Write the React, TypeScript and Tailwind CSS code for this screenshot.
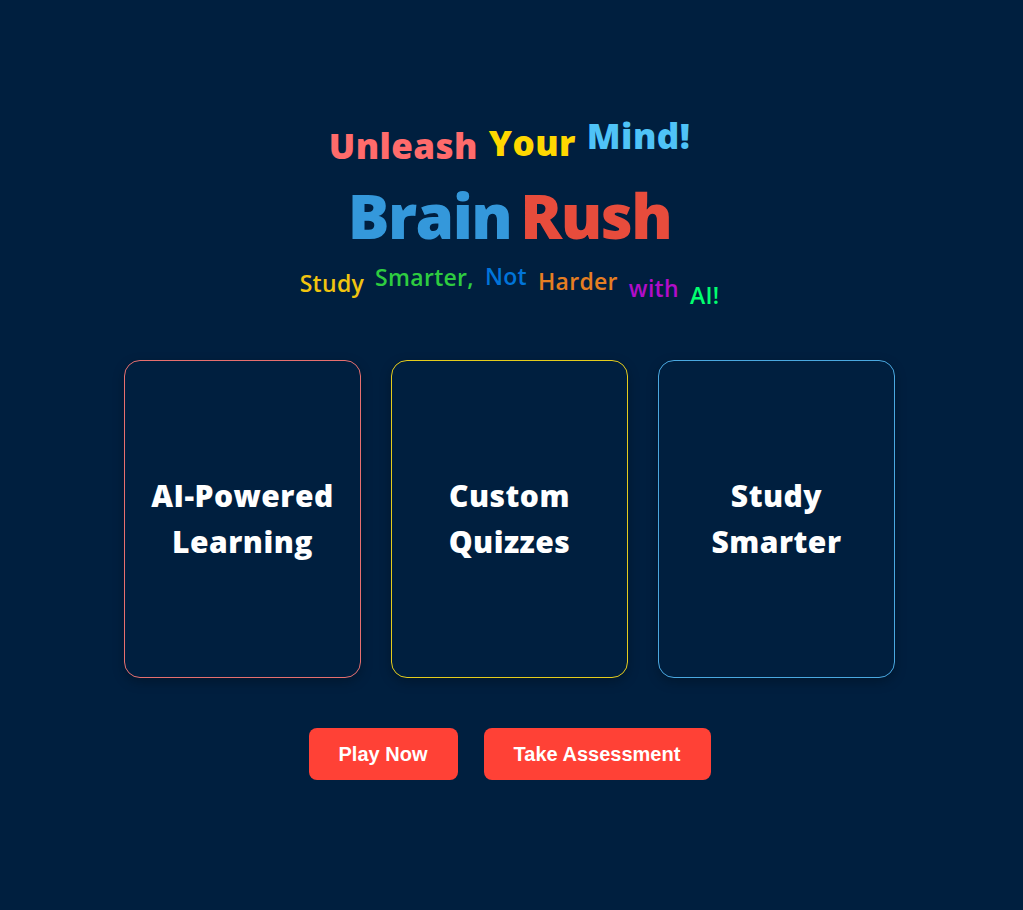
import React from "react";

const font = { fontFamily: '"Open Sans", "Noto Sans", sans-serif' };

export default function App() {
  return (
    <main
      className="min-h-[910px] w-full bg-[#001f3f] flex flex-col items-center pt-[110px] pr-[4px]"
      style={font}
    >
      {/* HEADLINE */}
      <h2 className="flex items-end gap-[11px] text-[35px] font-extrabold leading-none tracking-[0.4px] h-[52px]">
        <span className="text-[#ff6b6b] translate-y-[1px]">Unleash</span>
        <span className="text-[#ffd700] -translate-y-[2px]">Your</span>
        <span className="text-[#4fc3f7] -translate-y-[9px]">Mind!</span>
      </h2>

      <h1 className="mt-[22px] flex gap-[9px] text-[62px] font-extrabold leading-none tracking-tight">
        <span className="text-[#3498db]">Brain</span>
        <span className="text-[#e74c3c]">Rush</span>
      </h1>

      <p className="mt-[17px] flex items-end gap-[11px] text-[23px] font-semibold leading-none tracking-[0.3px] h-[44px]">
        <span className="text-[#f1c40f] -translate-y-[12px]">Study</span>
        <span className="text-[#2ecc40] -translate-y-[18px]">Smarter,</span>
        <span className="text-[#0074d9] -translate-y-[19px]">Not</span>
        <span className="text-[#e67e22] -translate-y-[14px]">Harder</span>
        <span className="text-[#b10dc9] -translate-y-[7px]">with</span>
        <span className="text-[#01ff70]">AI!</span>
      </p>

      {/* FEATURE CARDS */}
      <div className="mt-[53px] grid grid-cols-3 gap-[30px]">
        {[
          ["AI-Powered", "Learning", "border-[#e76f6f]"],
          ["Custom", "Quizzes", "border-[#e5cc1c]"],
          ["Study", "Smarter", "border-[#4aa8e0]"],
        ].map(([a, b, border]) => (
          <div
            key={a}
            className={`w-[237px] h-[318px] rounded-[16px] border ${border} flex items-center justify-center text-center text-white text-[30px] font-extrabold leading-[46px] tracking-[0.5px] shadow-[0_4px_12px_rgba(0,0,0,0.25)]`}
          >
            <div>
              {a}
              <br />
              {b}
            </div>
          </div>
        ))}
      </div>

      {/* ACTIONS */}
      <div
        className="mt-[50px] flex gap-[26px]"
        style={{ fontFamily: '"Liberation Sans", Arial, sans-serif' }}
      >
        <button className="w-[149px] h-[52px] rounded-[8px] bg-[#ff4136] text-white text-[20px] font-bold">
          Play Now
        </button>
        <button className="w-[227px] h-[52px] rounded-[8px] bg-[#ff4136] text-white text-[20px] font-bold">
          Take Assessment
        </button>
      </div>
    </main>
  );
}
